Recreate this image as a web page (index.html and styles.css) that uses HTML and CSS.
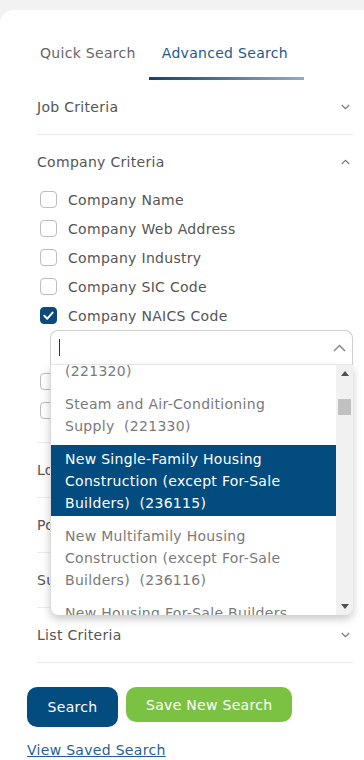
FILE: index.html
```html
<!DOCTYPE html>
<html lang="en">
<head>
<meta charset="utf-8">
<title>Advanced Search</title>
<link rel="stylesheet" href="styles.css">
</head>
<body>
<div class="card">
  <nav class="tabs">
    <div class="tab">Quick Search</div>
    <div class="tab active">Advanced Search</div>
  </nav>

  <div class="acc">
    <section class="sec">
      <div class="sec-head"><span>Job Criteria</span>
        <svg class="chev" width="9" height="6" viewBox="0 0 9 6"><path d="M0.8 1 L4.5 4.6 L8.2 1" fill="none" stroke="#7a7a7a" stroke-width="1.2"/></svg>
      </div>
    </section>

    <section class="sec open">
      <div class="sec-head"><span>Company Criteria</span>
        <svg class="chev" width="9" height="6" viewBox="0 0 9 6"><path d="M0.8 5 L4.5 1.4 L8.2 5" fill="none" stroke="#7a7a7a" stroke-width="1.2"/></svg>
      </div>
      <div class="sec-body">
        <label class="cb-row"><span class="cb"></span>Company Name</label>
        <label class="cb-row"><span class="cb"></span>Company Web Address</label>
        <label class="cb-row"><span class="cb"></span>Company Industry</label>
        <label class="cb-row"><span class="cb"></span>Company SIC Code</label>
        <label class="cb-row"><span class="cb checked"><svg width="17" height="17" viewBox="0 0 17 17"><path d="M4.3 8.8 L7.3 11.7 L12.6 5.6" fill="none" stroke="#fff" stroke-width="2" stroke-linecap="round" stroke-linejoin="round"/></svg></span>Company NAICS Code</label>

        <div class="select">
          <div class="select-input">
            <span class="caret"></span>
            <svg width="13" height="8" viewBox="0 0 13 8"><path d="M1 7 L6.5 1.5 L12 7" fill="none" stroke="#8a8a8a" stroke-width="1.5"/></svg>
          </div>
          <div class="menu">
            <div class="menu-list">
              <div class="opts">
                <div class="opt">Sewage Treatment Facilities&nbsp; (221320)</div>
                <div class="opt">Steam and Air-Conditioning Supply&nbsp; (221330)</div>
                <div class="opt selected">New Single-Family Housing Construction (except For-Sale Builders)&nbsp; (236115)</div>
                <div class="opt">New Multifamily Housing Construction (except For-Sale Builders)&nbsp; (236116)</div>
                <div class="opt">New Housing For-Sale Builders&nbsp; (236117)</div>
              </div>
            </div>
            <div class="scrollbar">
              <span class="arr"><svg width="8" height="5" viewBox="0 0 8 5"><path d="M0 5 L4 0 L8 5 Z" fill="#505050"/></svg></span>
              <span class="thumb"></span>
              <span class="arr bottom"><svg width="8" height="5" viewBox="0 0 8 5"><path d="M0 0 L8 0 L4 5 Z" fill="#505050"/></svg></span>
            </div>
          </div>
        </div>

        <label class="cb-row"><span class="cb"></span>Company Revenue</label>
        <label class="cb-row"><span class="cb"></span>Company Employees</label>
      </div>
    </section>

    <section class="sec">
      <div class="sec-head"><span>Location Criteria</span>
        <svg class="chev" width="9" height="6" viewBox="0 0 9 6"><path d="M0.8 1 L4.5 4.6 L8.2 1" fill="none" stroke="#7a7a7a" stroke-width="1.2"/></svg>
      </div>
    </section>
    <section class="sec">
      <div class="sec-head"><span>Position Criteria</span>
        <svg class="chev" width="9" height="6" viewBox="0 0 9 6"><path d="M0.8 1 L4.5 4.6 L8.2 1" fill="none" stroke="#7a7a7a" stroke-width="1.2"/></svg>
      </div>
    </section>
    <section class="sec">
      <div class="sec-head"><span>Suppression Criteria</span>
        <svg class="chev" width="9" height="6" viewBox="0 0 9 6"><path d="M0.8 1 L4.5 4.6 L8.2 1" fill="none" stroke="#7a7a7a" stroke-width="1.2"/></svg>
      </div>
    </section>
    <section class="sec">
      <div class="sec-head"><span>List Criteria</span>
        <svg class="chev" width="9" height="6" viewBox="0 0 9 6"><path d="M0.8 1 L4.5 4.6 L8.2 1" fill="none" stroke="#7a7a7a" stroke-width="1.2"/></svg>
      </div>
    </section>
  </div>

  <div class="actions">
    <button class="btn btn-primary" type="button">Search</button>
    <button class="btn btn-green" type="button">Save New Search</button>
  </div>
  <a class="link" href="#">View Saved Search</a>
</div>
</body>
</html>
```

FILE: styles.css
```css
* { box-sizing: border-box; }

html, body {
  margin: 0;
  padding: 0;
}

body {
  background: #f2f2f2;
  font-family: "DejaVu Sans", "Noto Sans", sans-serif;
  font-size: 14px;
  letter-spacing: 0.3px;
  color: #555;
}

.card {
  margin-top: 10px;
  min-height: 750px;
  background: #fff;
  border-radius: 14px 0 0 0;
  padding: 33px 11px 20px 27px;
}

.tabs {
  display: flex;
}

.tab {
  padding: 0 13px 17px;
  line-height: 20px;
  color: #666;
  white-space: nowrap;
}

.tab.active {
  padding-right: 16px;
  color: #1d5a8c;
  background: linear-gradient(90deg, #0a4676, #8eadc8) left bottom / 100% 3px no-repeat;
}

.acc {
  margin-left: 10px;
}

.sec {
  border-bottom: 1px solid #ebebeb;
}

.sec-head {
  height: 54px;
  display: flex;
  align-items: center;
  justify-content: space-between;
  padding-right: 3px;
  color: #555;
  line-height: 18px;
}

.sec.open .sec-head {
  height: 50px;
  padding-top: 4px;
}

.chev { display: block; }

.sec-body {
  padding: 0 0 17px 3px;
}

.cb-row {
  height: 29px;
  display: flex;
  align-items: center;
  gap: 11px;
  color: #555;
}

.cb {
  width: 17px;
  height: 17px;
  flex: none;
  border: 1px solid #bdbdbd;
  border-radius: 4px;
  background: #fff;
}

.cb.checked {
  border-color: #0b4a7d;
  background: #0b4a7d;
  position: relative;
}

.cb.checked svg {
  position: absolute;
  left: -1px;
  top: -1px;
}

.select {
  position: relative;
  margin: 0 0 2px 10px;
  z-index: 5;
}

.select-input {
  height: 35px;
  border: 1px solid #d0d0d0;
  border-bottom-color: #eeeeee;
  border-radius: 8px 8px 0 0;
  display: flex;
  align-items: center;
  justify-content: space-between;
  padding: 0 6px 0 8px;
  background: #fff;
}

.caret {
  width: 1px;
  height: 17px;
  background: #333;
}

.menu {
  position: absolute;
  top: 100%;
  left: 0;
  right: 0;
  height: 250px;
  display: flex;
  background: #fff;
  border-left: 1px solid #dcdcdc;
  border-radius: 0 0 8px 8px;
  box-shadow: 0 4px 8px rgba(0, 0, 0, 0.22);
  overflow: hidden;
}

.menu-list {
  flex: 1;
  overflow: hidden;
}

.opts {
  margin-top: -30px;
  display: flex;
  flex-direction: column;
  gap: 6px;
}

.opt {
  padding: 3px 30px 2px 14px;
  line-height: 22px;
  color: #7a7a7a;
}

.opt.selected {
  background: #034c80;
  color: #fff;
}

.scrollbar {
  width: 17px;
  flex: none;
  background: #f1f1f1;
  display: flex;
  flex-direction: column;
  align-items: center;
}

.arr {
  height: 17px;
  display: flex;
  align-items: center;
  justify-content: center;
}

.arr.bottom {
  margin-top: auto;
}

.thumb {
  width: 13px;
  height: 16px;
  margin-top: 17px;
  background: #c1c1c1;
}

.actions {
  margin-top: 24px;
  display: flex;
  align-items: flex-start;
  gap: 8px;
}

.btn {
  border: none;
  font-family: inherit;
  font-size: 14px;
  letter-spacing: 0.3px;
  color: #fff;
  border-radius: 10px;
  cursor: pointer;
}

.btn-primary {
  width: 91px;
  height: 40px;
  background: #034c80;
}

.btn-green {
  height: 35px;
  padding: 0 20px;
  background: #7cc242;
}

.link {
  display: inline-block;
  margin-top: 14px;
  line-height: 18px;
  color: #1f5f96;
  text-decoration: underline;
}
```
